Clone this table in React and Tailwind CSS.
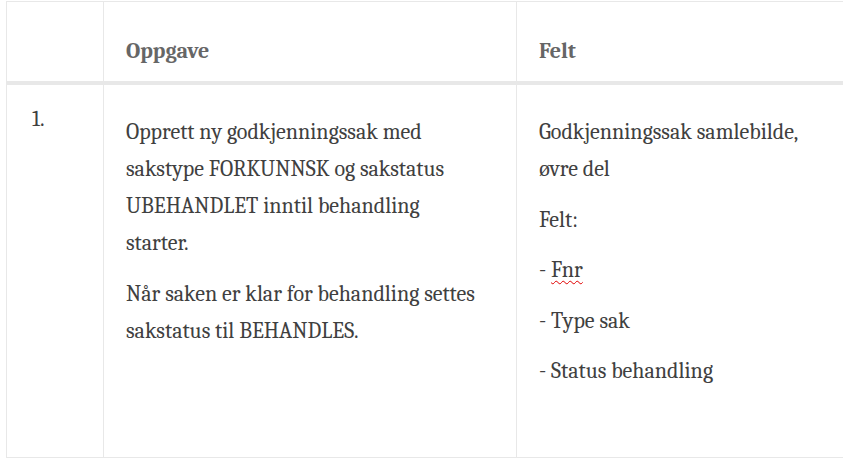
export default function App() {
  return (
    <div className="w-[843px] h-[465px] overflow-hidden bg-white [font-family:Cambria,'Liberation_Serif','Times_New_Roman',serif] text-[22px] leading-[37px] text-[#404040]">
      <div className="ml-[6px] mt-[1px] w-[900px] border-t border-l border-b border-[#e8e8e8]">
        <div className="grid grid-cols-[96px_413px_1fr] h-[83px] border-b-4 border-[#e8e8e8]">
          <div />
          <div className="border-l border-[#e8e8e8] pl-[22px] pt-[31px] font-bold text-[#666666]">Oppgave</div>
          <div className="border-l border-[#e8e8e8] pl-[22px] pt-[31px] font-bold text-[#666666]">Felt</div>
        </div>
        <div className="grid grid-cols-[96px_413px_1fr] h-[372px]">
          <div className="pl-[25px] pt-[16px]">1.</div>
          <div className="border-l border-[#e8e8e8] pl-[22px] pr-[34px] pt-[29px] flex flex-col gap-[14px]">
            <p>Opprett ny godkjenningssak med sakstype FORKUNNSK og sakstatus UBEHANDLET inntil behandling starter.</p>
            <p>Når saken er klar for behandling settes sakstatus til BEHANDLES.</p>
          </div>
          <div className="border-l border-[#e8e8e8] pl-[22px] pt-[29px]">
            <div className="w-[285px] flex flex-col gap-[13.5px]">
              <p>Godkjenningssak samlebilde, øvre del</p>
              <p>Felt:</p>
              <p>- <span className="underline decoration-wavy decoration-[#e00000] decoration-1 underline-offset-[3px]">Fnr</span></p>
              <p>- Type sak</p>
              <p>- Status behandling</p>
            </div>
          </div>
        </div>
      </div>
    </div>
  );
}
